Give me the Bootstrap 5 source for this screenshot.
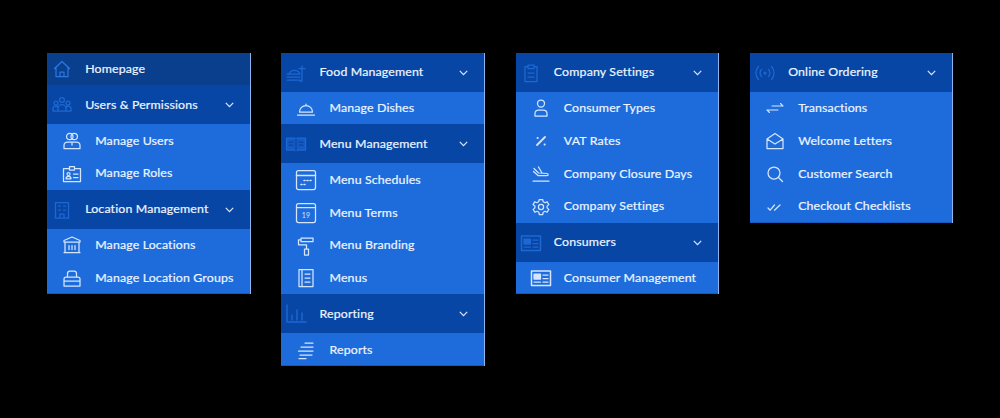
<!DOCTYPE html>
<html lang="en">
<head>
  <meta charset="UTF-8">
  <title>Sidebar Menus</title>
  <link href="https://cdn.jsdelivr.net/npm/bootstrap@5.3.3/dist/css/bootstrap.min.css" rel="stylesheet">
  <style>
    html, body { background: #000; height: 100%; }
    body { font-family: "Lato", "Liberation Sans", sans-serif; overflow: hidden; }
    .board { padding: 52.5px 0 0 47px; gap: 30.83px; }
    .side-panel { width: 203.5px; background: #1e6cdc; border-right: 1px solid #8db4ec; box-shadow: inset 0 -1px 0 #1559bd; }
    .side-head, .side-sub, .side-home { color: #eef5ff; text-decoration: none; font-size: 12.35px; letter-spacing: .15px; white-space: nowrap; -webkit-text-stroke: .2px #eef5ff; }
    .side-head { height: 39px; background: #0846a6; padding: 1px 16px 0 3px; }
    .side-home { height: 32.5px; background: #0a3f8e; padding: 1px 16px 0 3px; }
    .side-sub { height: 32.75px; padding: 1px 10px 0 13px; }
    .side-ico { width: 24px; height: 24px; flex: none; fill: none; stroke-width: 1.25; stroke-linecap: round; stroke-linejoin: round; margin-right: 11.2px; }
    .side-head .side-ico { stroke: #1d68d2; color: #1d68d2; }
    .side-home .side-ico { stroke: #2a78e2; }
    .side-sub .side-ico { stroke: #d5e5fc; color: #d5e5fc; }
    .side-chev { width: 9px; height: 6px; fill: none; stroke: #dbe8fb; stroke-width: 1.2; flex: none; margin-left: auto; }
    .ico-num { font: 7px "Lato", sans-serif; fill: #d5e5fc; stroke: none; }
  </style>
</head>
<body>
  <svg width="0" height="0" class="position-absolute">
    <symbol id="i-chev" viewBox="0 0 9 6"><path d="M.8.8l3.700 3.900L8.200.8"/></symbol>
    <symbol id="i-home" viewBox="0 0 24 24"><path d="M4.500 11.500L12 4.500l7.500 7M6 10.500V19.500h12V10.500M10 19.500v-4.500h4v4.500"/></symbol>
    <symbol id="i-group" viewBox="0 0 24 24"><circle cx="12" cy="7" r="2.400"/><circle cx="6" cy="10" r="2"/><circle cx="18" cy="10" r="2"/><path d="M3 18v-2.500a2.500 2.500 0 0 1 5 0M8 18v-2.500a4 4 0 0 1 8 0V18M16 15.500a2.500 2.500 0 0 1 5 0V18H3"/></symbol>
    <symbol id="i-users" viewBox="0 0 24 24"><circle cx="9.800" cy="7.500" r="3.200"/><circle cx="14.200" cy="7.500" r="3.200"/><path d="M4 19.500v-3a3.500 3.500 0 0 1 3.500-3.500h9a3.500 3.500 0 0 1 3.500 3.500v3zM12 13v3"/></symbol>
    <symbol id="i-badge" viewBox="0 0 24 24"><path d="M9.500 6.500H3.500v13h17v-13h-6M9.500 4.500h5v3.500h-5z"/><circle cx="8.500" cy="12" r="1.500"/><path d="M6 16.800a2.500 2.500 0 0 1 5 0zM13.500 12H18M13.500 15.500H18"/></symbol>
    <symbol id="i-building" viewBox="0 0 24 24"><path d="M5.500 20V4.500h13V20M5 20h14M10 20v-4h4v4M8.500 8h2M13.500 8h2M8.500 12h2M13.500 12h2"/></symbol>
    <symbol id="i-bank" viewBox="0 0 24 24"><path d="M12 4L4 7.500V9h16V7.500zM5 9.500v10h14v-10M4 19.500h16M9 12.500v4M12 12.500v4M15 12.500v4"/></symbol>
    <symbol id="i-layers" viewBox="0 0 24 24"><path d="M7.500 11V7.500a2.500 2.500 0 0 1 2.500-2.500h4a2.500 2.500 0 0 1 2.500 2.500V11M6 11h12a2 2 0 0 1 2 2v7H4v-7a2 2 0 0 1 2-2zM4 15h16"/></symbol>
    <symbol id="i-food" viewBox="0 0 24 24"><path d="M18 5v15h-2M15 7.500h6M5 13a6 6 0 0 1 11 0zM3 16h13M3 19h13M3 13h13"/></symbol>
    <symbol id="i-bell" viewBox="0 0 24 24"><path d="M5.500 16a6.500 6.500 0 0 1 13 0zM3.500 19h17M12 9.500V8"/></symbol>
    <symbol id="i-book" viewBox="0 0 24 24"><path d="M2.500 6h8l1.500 1 1.500-1h8v12h-8l-1.500 1-1.500-1h-8z" fill="currentColor" fill-opacity=".6"/><path d="M12 7v12M5 10h4M5 13h4M15 10h4M15 13h4" stroke="#0846a6"/></symbol>
    <symbol id="i-cal1" viewBox="0 0 24 24"><rect x="2.500" y="2.500" width="19" height="19" rx="2"/><path d="M2.500 7.500h19M13 12.500h1M16 12.500h1M10 12.500h1M7 16.500h1M10 16.500h1" stroke-width="1.600"/></symbol>
    <symbol id="i-roller" viewBox="0 0 24 24"><path d="M7 4h12v3.500H7zM7 5.800H4.500v5h8v4M10.500 15h4v6h-4z"/></symbol>
    <symbol id="i-menu" viewBox="0 0 24 24"><path d="M5 3.500h14v17H5zM8 3.500v17M11 8h5M11 12h5M11 16h5"/></symbol>
    <symbol id="i-chart" viewBox="0 0 24 24"><path d="M3 3v17h19M8 18v-5M13 18V8M18 18v-7" stroke-width="1.400"/></symbol>
    <symbol id="i-lines" viewBox="0 0 24 24"><path d="M11 5h8M7 9h12M4.500 13h14.500M6 17h12M5 20.500h7"/></symbol>
    <symbol id="i-clip" viewBox="0 0 24 24"><path d="M9 5.500H6v15h12v-15h-3M9 4h6v3.500H9zM9 12h6M9 16h6"/></symbol>
    <symbol id="i-person" viewBox="0 0 24 24"><circle cx="12" cy="7.500" r="3.500"/><path d="M6 20v-2.500a3.500 3.500 0 0 1 3.500-3.500h5a3.500 3.500 0 0 1 3.500 3.500V20z"/></symbol>
    <symbol id="i-percent" viewBox="0 0 24 24"><path d="M16 8l-8 8M8.500 9h.3M15.500 15.500h.3" stroke-width="1.800"/></symbol>
    <symbol id="i-plane" viewBox="0 0 24 24"><path d="M5 6.500l4.500 4.500 8.500.5c1.800.5 1.500 2 0 2L9 13.500 4.500 9.500M9.500 5l3.500 6M4 19h16"/></symbol>
    <symbol id="i-gear" viewBox="0 0 24 24"><circle cx="12" cy="12" r="2.600"/><path d="M10.300 4.500h3.400l.5 2.300 1.800.9 2.100-1 1.700 2.900-1.700 1.500v1.800l1.700 1.500-1.700 2.900-2.100-1-1.800.9-.5 2.300h-3.400l-.5-2.300-1.800-.9-2.100 1-1.700-2.900 1.700-1.500v-1.800L4 9.600l1.700-2.900 2.100 1 1.800-.9z"/></symbol>
    <symbol id="i-card" viewBox="0 0 24 24"><rect x="2.500" y="5" width="19" height="14.500" stroke-width="1.500"/><rect x="5" y="8" width="6.500" height="5" fill="currentColor"/><path d="M5 16h6.500M14 9h5M14 12.500h5M14 16h5"/></symbol>
    <symbol id="i-wave" viewBox="0 0 24 24"><circle cx="12" cy="12" r="1"/><path d="M8.500 8.500a5 5 0 0 0 0 7M15.500 8.500a5 5 0 0 1 0 7M5.500 5.500a9.500 9.500 0 0 0 0 13M18.500 5.500a9.500 9.500 0 0 1 0 13"/></symbol>
    <symbol id="i-swap" viewBox="0 0 24 24"><path d="M9 10h11M17.500 7.500L20 10M15 14H4M6.500 16.500L4 14" stroke-width="1.100"/></symbol>
    <symbol id="i-mail" viewBox="0 0 24 24"><path d="M4 10l8-5.500 8 5.500v9.500H4zM4 10l8 5 8-5"/></symbol>
    <symbol id="i-search" viewBox="0 0 24 24"><circle cx="11" cy="11" r="6"/><path d="M15.500 15.500L19.500 19.500"/></symbol>
    <symbol id="i-check" viewBox="0 0 24 24"><path d="M5 13l2.200 2.200L11.500 10M11.500 15.200L17 10"/></symbol>
  </svg>

  <div class="board d-flex align-items-start">
    <div class="side-panel d-flex flex-column">
      <a class="side-home d-flex align-items-center" href="#"><svg class="side-ico"><use href="#i-home"/></svg>Homepage</a>
      <a class="side-head d-flex align-items-center" href="#"><svg class="side-ico"><use href="#i-group"/></svg>Users &amp; Permissions<svg class="side-chev"><use href="#i-chev"/></svg></a>
      <a class="side-sub d-flex align-items-center" href="#"><svg class="side-ico"><use href="#i-users"/></svg>Manage Users</a>
      <a class="side-sub d-flex align-items-center" href="#"><svg class="side-ico"><use href="#i-badge"/></svg>Manage Roles</a>
      <a class="side-head d-flex align-items-center" href="#"><svg class="side-ico"><use href="#i-building"/></svg>Location Management<svg class="side-chev"><use href="#i-chev"/></svg></a>
      <a class="side-sub d-flex align-items-center" href="#"><svg class="side-ico"><use href="#i-bank"/></svg>Manage Locations</a>
      <a class="side-sub d-flex align-items-center" href="#"><svg class="side-ico"><use href="#i-layers"/></svg>Manage Location Groups</a>
    </div>

    <div class="side-panel d-flex flex-column">
      <a class="side-head d-flex align-items-center" href="#"><svg class="side-ico"><use href="#i-food"/></svg>Food Management<svg class="side-chev"><use href="#i-chev"/></svg></a>
      <a class="side-sub d-flex align-items-center" href="#"><svg class="side-ico"><use href="#i-bell"/></svg>Manage Dishes</a>
      <a class="side-head d-flex align-items-center" href="#"><svg class="side-ico"><use href="#i-book"/></svg>Menu Management<svg class="side-chev"><use href="#i-chev"/></svg></a>
      <a class="side-sub d-flex align-items-center" href="#"><svg class="side-ico"><use href="#i-cal1"/></svg>Menu Schedules</a>
      <a class="side-sub d-flex align-items-center" href="#"><svg class="side-ico" viewBox="0 0 24 24"><rect x="2.500" y="2.500" width="19" height="19" rx="2"/><path d="M2.500 6.500h19"/><text x="12" y="17" text-anchor="middle" class="ico-num">19</text></svg>Menu Terms</a>
      <a class="side-sub d-flex align-items-center" href="#"><svg class="side-ico"><use href="#i-roller"/></svg>Menu Branding</a>
      <a class="side-sub d-flex align-items-center" href="#"><svg class="side-ico"><use href="#i-menu"/></svg>Menus</a>
      <a class="side-head d-flex align-items-center" href="#"><svg class="side-ico"><use href="#i-chart"/></svg>Reporting<svg class="side-chev"><use href="#i-chev"/></svg></a>
      <a class="side-sub d-flex align-items-center" href="#"><svg class="side-ico"><use href="#i-lines"/></svg>Reports</a>
    </div>

    <div class="side-panel d-flex flex-column">
      <a class="side-head d-flex align-items-center" href="#"><svg class="side-ico"><use href="#i-clip"/></svg>Company Settings<svg class="side-chev"><use href="#i-chev"/></svg></a>
      <a class="side-sub d-flex align-items-center" href="#"><svg class="side-ico"><use href="#i-person"/></svg>Consumer Types</a>
      <a class="side-sub d-flex align-items-center" href="#"><svg class="side-ico"><use href="#i-percent"/></svg>VAT Rates</a>
      <a class="side-sub d-flex align-items-center" href="#"><svg class="side-ico"><use href="#i-plane"/></svg>Company Closure Days</a>
      <a class="side-sub d-flex align-items-center" href="#"><svg class="side-ico"><use href="#i-gear"/></svg>Company Settings</a>
      <a class="side-head d-flex align-items-center" href="#"><svg class="side-ico"><use href="#i-card"/></svg>Consumers<svg class="side-chev"><use href="#i-chev"/></svg></a>
      <a class="side-sub d-flex align-items-center" href="#"><svg class="side-ico"><use href="#i-card"/></svg>Consumer Management</a>
    </div>

    <div class="side-panel d-flex flex-column">
      <a class="side-head d-flex align-items-center" href="#"><svg class="side-ico"><use href="#i-wave"/></svg>Online Ordering<svg class="side-chev"><use href="#i-chev"/></svg></a>
      <a class="side-sub d-flex align-items-center" href="#"><svg class="side-ico"><use href="#i-swap"/></svg>Transactions</a>
      <a class="side-sub d-flex align-items-center" href="#"><svg class="side-ico"><use href="#i-mail"/></svg>Welcome Letters</a>
      <a class="side-sub d-flex align-items-center" href="#"><svg class="side-ico"><use href="#i-search"/></svg>Customer Search</a>
      <a class="side-sub d-flex align-items-center" href="#"><svg class="side-ico"><use href="#i-check"/></svg>Checkout Checklists</a>
    </div>
  </div>

  <script src="https://cdn.jsdelivr.net/npm/bootstrap@5.3.3/dist/js/bootstrap.bundle.min.js"></script>
</body>
</html>
